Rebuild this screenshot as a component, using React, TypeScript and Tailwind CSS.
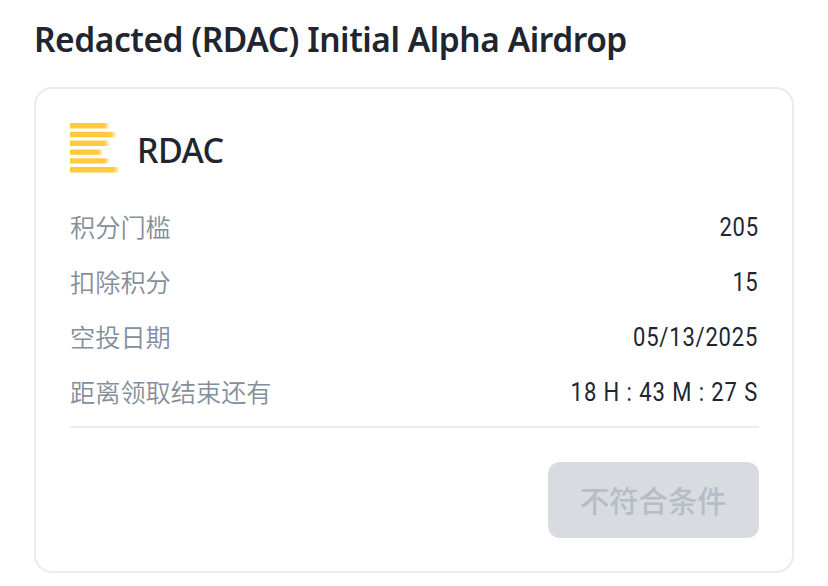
interface DetailRow {
	label: string;
	value: string;
	spacing: string;
}

const rows: DetailRow[] = [
	{ label: '积分门槛', value: '205', spacing: 'tracking-[0.9px]' },
	{ label: '扣除积分', value: '15', spacing: 'tracking-[0.5px]' },
	{ label: '空投日期', value: '05/13/2025', spacing: 'tracking-[0.9px]' },
	{ label: '距离领取结束还有', value: '18 H : 43 M : 27 S', spacing: 'tracking-[1.05px]' }
];

const bars = [
	{ y: 0, width: 39 },
	{ y: 8.8, width: 46 },
	{ y: 17.6, width: 39 },
	{ y: 26.4, width: 32 },
	{ y: 35.2, width: 39 },
	{ y: 44, width: 49 }
];

function TokenLogo() {
	return (
		<svg width="50" height="50" viewBox="0 0 50 50" className="shrink-0">
			<defs>
				<linearGradient id="bar">
					<stop offset="0.88" stopColor="#ffcb3c" />
					<stop offset="0.93" stopColor="#ffdc80" />
					<stop offset="1" stopColor="#fff3d2" />
				</linearGradient>
			</defs>
			{bars.map((bar) => (
				<rect key={bar.y} y={bar.y} width={bar.width} height="5.4" rx="0.5" fill="url(#bar)" />
			))}
		</svg>
	);
}

export default function App() {
	return (
		<main className="h-[586px] w-[828px] overflow-hidden bg-white px-[34px] pt-4 font-['Roboto','Noto_Sans_CJK_SC',sans-serif] text-[#202630]">
			<h1 className="h-[71px] font-['Noto_Sans',sans-serif] text-[33.5px] leading-[46px] font-semibold tracking-[-0.45px] whitespace-nowrap">
				Redacted (RDAC) Initial Alpha Airdrop
			</h1>
			<section className="h-[486px] w-[760px] rounded-[18px] border-2 border-[#eaebef] pt-[34px] pr-[33.5px] pl-[34px]">
				<div className="flex h-[50px] items-center gap-[17px]">
					<TokenLogo />
					<h2 className="pt-1 font-['Noto_Sans',sans-serif] text-[34px] leading-[44px] font-medium tracking-[-0.6px]">
						RDAC
					</h2>
				</div>
				<dl className="mt-[26px] border-b-2 border-[#eaebef] pb-[7px]">
					{rows.map((row) => (
						<div key={row.label} className="flex h-[55px] items-center justify-between text-[25px] leading-none">
							<dt className="font-['Noto_Sans_CJK_SC',sans-serif] text-[25.2px] font-[350] text-[#848e9c]">
								{row.label}
							</dt>
							<dd className={`origin-right scale-x-[0.88] pt-0.5 ${row.spacing}`}>{row.value}</dd>
						</div>
					))}
				</dl>
				<div className="mt-[34px] flex justify-end">
					<button
						disabled
						className="h-[76px] w-[210.5px] rounded-xl bg-[#d8dce1] font-['Noto_Sans_CJK_SC',sans-serif] text-[29.3px] leading-none font-medium text-[#b7bdc6]"
					>
						不符合条件
					</button>
				</div>
			</section>
		</main>
	);
}
